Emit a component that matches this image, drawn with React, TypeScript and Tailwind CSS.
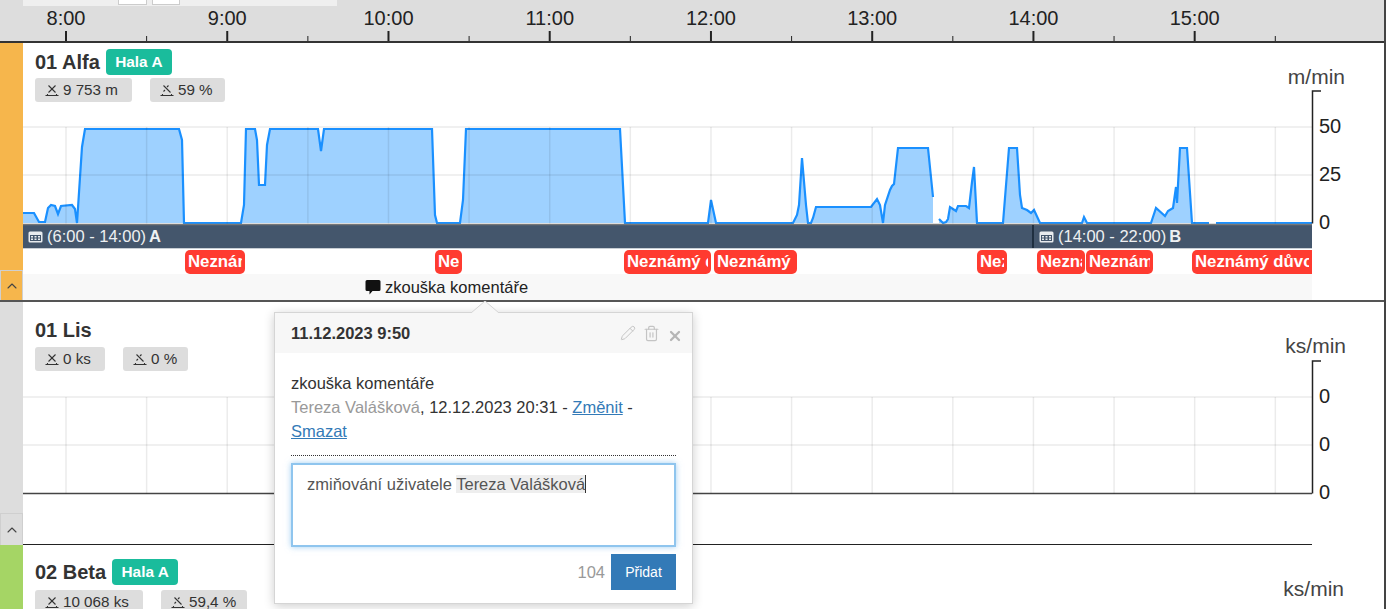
import { Pencil, Trash2, X, ChevronUp } from 'lucide-react';

const HOURS = ['8:00', '9:00', '10:00', '11:00', '12:00', '13:00', '14:00', '15:00'];
const GRID_X = Array.from({ length: 16 }, (_, i) => 66 + i * 80.62);

const ALFA_LINE = [
  [23, 213], [34, 213], [39, 222], [45, 222], [48, 208], [51, 205], [55, 206], [58, 214], [61, 206], [72, 205], [75, 209], [77, 223],
  [82, 147], [85, 129], [179, 129], [182, 140], [184, 223], [241, 223], [244, 205], [246, 129], [255, 129], [257, 140], [259, 185], [265, 185],
  [267, 145], [270, 129], [318, 129], [321, 151], [324, 129], [432, 129], [435, 215], [437, 223], [460, 223], [463, 200], [466, 129], [620, 129],
  [625, 223], [708, 223], [711, 200], [716, 223], [793, 223], [797, 215], [799, 205], [802, 158], [806, 205], [808, 223], [811, 223], [813, 218],
  [816, 207], [871, 207], [877, 199], [880, 205], [883, 223], [885, 205], [890, 190], [892, 186], [894, 184], [898, 148], [928, 148], [933, 197],
];
const ALFA_LINE_2 = [
  [939, 219], [943, 223], [946, 222], [948, 219], [950, 207], [956, 211], [958, 206], [966, 206], [969, 208], [972, 182], [974, 167], [977, 223],
  [1003, 223], [1009, 148], [1017, 148], [1020, 195], [1022, 208], [1027, 210], [1031, 213], [1034, 210], [1040, 223], [1082, 223], [1084, 217],
  [1087, 223], [1151, 223], [1156, 208], [1165, 216], [1168, 211], [1173, 208], [1176, 187], [1177, 203], [1180, 148], [1187, 148], [1192, 223], [1209, 223],
];
const ALFA_LINE_3 = [[1216, 223], [1312, 223]];

const FAULTS = [
  { left: 185, width: 60 },
  { left: 435, width: 27 },
  { left: 624, width: 87 },
  { left: 714, width: 83 },
  { left: 977, width: 30 },
  { left: 1037, width: 48 },
  { left: 1086, width: 67 },
  { left: 1192, width: 120, cut: true },
];

const toPoints = (line: number[][]) => line.map((p) => p.join(',')).join(' ');

const StatIcon = ({ percent }: { percent?: boolean }) => (
  <svg width="14" height="14" viewBox="0 0 14 14" fill="none" stroke="#333" strokeWidth="1.1" className="shrink-0">
    <path d="M0.5 12.5h13M2.5 12.5v-1.5M11.5 12.5v-1.5" />
    <path d="M3.5 2.5l7 7" />
    {percent ? <path d="M8.5 2.5l-1.5 1.5M5 7l-1.5 1.5" /> : <path d="M10.5 2.5l-7 7" />}
  </svg>
);

const CalendarIcon = () => (
  <svg width="15" height="12" viewBox="0 0 15 12" className="shrink-0">
    <rect x="0.5" y="0.5" width="14" height="11" rx="1.5" fill="#e8ebee" />
    <path d="M2 4h11v6H2z" fill="#44566c" />
    <path d="M3 5h2v1.5H3zM6.5 5h2v1.5h-2zM10 5h2v1.5h-2zM3 7.5h2V9H3zM6.5 7.5h2V9h-2zM10 7.5h2V9h-2z" fill="#e8ebee" />
  </svg>
);

const Stat = ({ text, percent, className }: { text: string; percent?: boolean; className: string }) => (
  <div className={`flex h-[24px] items-center gap-[4px] rounded-[3px] bg-[#dddddd] pl-[10px] text-[15.2px] text-[#333] ${className}`}>
    <StatIcon percent={percent} />
    <span>{text}</span>
  </div>
);

const Badge = () => (
  <span className="flex h-[26px] w-[66px] items-center justify-center rounded-[4px] bg-[#1abc9c] text-[15.4px] font-bold text-white">
    Hala A
  </span>
);

const Chart = ({ top, height, labels, children }: { top: number; height: number; labels: string[]; children?: React.ReactNode }) => {
  // page coordinates are used inside the viewBox, top is the page y of the svg
  const gridTop = top + (labels === ALFA_LABELS ? 25 : 25);
  const gridY = [gridTop, gridTop + 48, gridTop + 96.5];
  return (
    <svg
      width="1363"
      height={height}
      viewBox={`23 ${top} 1363 ${height}`}
      className="block overflow-visible"
      style={{ fontFamily: '"Liberation Sans", Arial, sans-serif' }}
    >
      {children}
      {gridY.slice(0, 2).map((y) => (
        <line key={y} x1="23" x2="1312" y1={y} y2={y} stroke="#000" strokeOpacity="0.08" strokeWidth="1.5" />
      ))}
      {GRID_X.map((x) => (
        <line key={x} x1={x} x2={x} y1={gridTop} y2={gridY[2]} stroke="#000" strokeOpacity="0.08" strokeWidth="1.5" />
      ))}
      <path d={`M1321 ${gridTop - 36}h-8.5V${gridY[2]}`} fill="none" stroke="#222" strokeWidth="1.5" />
      {labels.map((label, i) => (
        <text key={i} x="1319" y={gridY[i] + 5.5} fontSize="20" fill="#222">
          {label}
        </text>
      ))}
    </svg>
  );
};

const ALFA_LABELS = ['50', '25', '0'];
const ZERO_LABELS = ['0', '0', '0'];

const Strip = ({ color, cellClass }: { color: string; cellClass: string }) => (
  <div className={`flex w-[23px] shrink-0 flex-col justify-end ${color}`}>
    <div className={`flex items-center justify-center border border-b-0 border-[#cfcfcf] ${cellClass}`}>
      <ChevronUp size={16} strokeWidth={1.6} className="text-[#444]" />
    </div>
  </div>
);

const Comment = () => (
  <div className="absolute left-[274px] top-[312px] z-10 h-[292px] w-[419px] border border-[#d5d5d5] bg-white text-[16.5px] text-[#333] shadow-[0_2px_10px_rgba(0,0,0,0.2)]">
    <svg width="28" height="12" viewBox="0 0 28 12" className="absolute left-[196px] top-[-12px]">
      <path d="M0 12L14 0l14 12" fill="#f7f7f7" stroke="#d5d5d5" />
    </svg>
    <div className="flex h-[40px] items-center justify-between bg-[#f7f7f7] pl-[16px] pr-[9px]">
      <span className="font-bold">11.12.2023 9:50</span>
      <div className="flex items-center gap-[7px] text-[#c4c4c4]">
        <Pencil size={16} strokeWidth={1.5} className="-scale-x-100 rotate-90" />
        <Trash2 size={17} strokeWidth={1.7} />
        <X size={16} strokeWidth={3.4} className="mt-[6px] text-[#b5b5b5]" />
      </div>
    </div>
    <div className="px-[16px] pt-[18px]">
      <div className="h-[85px] border-b border-dotted border-[#333] leading-[24px]">
        <div>zkouška komentáře</div>
        <div>
          <span className="text-[#999]">Tereza Valášková</span>, 12.12.2023 20:31 -{' '}
          <a href="#" className="text-[#337ab7] underline">
            Změnit
          </a>{' '}
          -{' '}
          <a href="#" className="text-[#337ab7] underline">
            Smazat
          </a>
        </div>
      </div>
      <div className="mt-[7px] h-[84px] border-2 border-[#8fc5ee] px-[14px] py-[7px] leading-[24px] text-[#555] shadow-[0_0_6px_rgba(102,175,233,0.6)]">
        zmiňování uživatele <span className="border-r border-[#333] bg-[#eeeeee]">Tereza Valášková</span>
      </div>
      <div className="mt-[7px] flex items-center justify-end gap-[6px]">
        <span className="text-[#999]">104</span>
        <button className="h-[36px] w-[65px] bg-[#337ab7] text-[14px] text-white">Přidat</button>
      </div>
    </div>
  </div>
);

export default function App() {
  return (
    <div className="h-[614px] w-[1390px] overflow-hidden bg-white font-['Liberation_Sans',Arial,sans-serif]">
      <div className="relative h-[609px] w-[1386px] overflow-hidden border-r-2 border-[#444]">
        <header className="h-[43px] border-b-2 border-[#333] bg-[#dddddd]">
          <div className="ml-[23px] flex h-[6px] w-[314px] items-end bg-[#efefef] pl-[95px]">
            <div className="mb-px h-[6px] w-[29px] border border-t-0 border-[#ccc] bg-white" />
            <div className="mb-px ml-[5px] h-[6px] w-[28px] border border-t-0 border-[#ccc] bg-white" />
          </div>
          <div className="ml-[-14.6px] flex h-[25px] items-center">
            {HOURS.map((hour) => (
              <div key={hour} className="w-[161.24px] shrink-0 text-center text-[20px] leading-[25px] text-[#222]">
                {hour}
              </div>
            ))}
          </div>
          <svg width="1385" height="10" viewBox="0 32 1385 10" className="block">
            {GRID_X.map((x, i) => (
              <line key={x} x1={x} x2={x} y1={i % 2 ? 37 : 32} y2="42" stroke="#222" strokeWidth={i % 2 ? 1 : 2} />
            ))}
          </svg>
        </header>

        {/* Alfa */}
        <section className="flex h-[259px] border-b-2 border-[#555]">
          <Strip color="bg-[#f6b64c]" cellClass="h-[30px] bg-[#f6b64c]" />
          <div className="flex-1">
            <div className="flex h-[59px] justify-between pl-[12px] pr-[41px]">
              <div>
                <div className="flex h-[35px] items-center gap-[6px] pt-[3px] text-[20px] font-bold text-[#333]">
                  01 Alfa
                  <Badge />
                </div>
                <div className="flex gap-[18px]">
                  <Stat text="9 753 m" className="w-[97px]" />
                  <Stat text="59 %" percent className="w-[75px]" />
                </div>
              </div>
              <div className="pt-[22px] text-[21px] leading-[24px] text-[#444]">m/min</div>
            </div>
            <Chart top={102} height={123} labels={ALFA_LABELS}>
              <polygon points={`23,223 ${toPoints(ALFA_LINE)} 933,223`} fill="#0d8bff" fillOpacity="0.4" />
              <polygon points={`939,223 ${toPoints(ALFA_LINE_2)}`} fill="#0d8bff" fillOpacity="0.4" />
              <polyline points={toPoints(ALFA_LINE)} fill="none" stroke="#1a90ff" strokeWidth="2.2" />
              <polyline points={toPoints(ALFA_LINE_2)} fill="none" stroke="#1a90ff" strokeWidth="2.2" />
              <polyline points={toPoints(ALFA_LINE_3)} fill="none" stroke="#1a90ff" strokeWidth="2.2" />
              <line x1="23" x2="1312" y1="224.5" y2="224.5" stroke="#777" strokeWidth="1.5" />
            </Chart>
            <div className="flex h-[24px] w-[1289px] border-b border-[#c8ced4] bg-[#44566c] text-[16.5px] leading-[23px] text-[#eef0f2]">
              <div className="flex w-[1009px] items-center gap-[2px] pl-[5px]">
                <CalendarIcon />
                <span className="ml-[2px]">(6:00 - 14:00)</span>
                <b className="ml-[1px]">A</b>
              </div>
              <div className="flex flex-1 items-center gap-[2px] border-l-2 border-[#1f2f40] pl-[5px]">
                <CalendarIcon />
                <span className="ml-[2px]">(14:00 - 22:00)</span>
                <b className="ml-[1px]">B</b>
              </div>
            </div>
            <div className="relative h-[25px] w-[1289px]">
              {FAULTS.map((fault) => (
                <div
                  key={fault.left}
                  className={`absolute top-[1px] h-[24px] bg-[#ff3b30] px-[3px] text-[16.8px] font-bold leading-[24px] text-white ${fault.cut ? 'rounded-l-[5px]' : 'rounded-[5px]'}`}
                  style={{ left: fault.left - 23, width: fault.width }}
                >
                  <div className="overflow-hidden whitespace-nowrap">Neznámý důvod</div>
                </div>
              ))}
            </div>
            <div className="flex h-[26px] w-[1289px] items-center gap-[4px] bg-[#f8f8f8] pl-[342px] text-[16.5px] text-[#222]">
              <svg width="16" height="16" viewBox="0 0 16 16" fill="#111">
                <path d="M2 1h12a1.5 1.5 0 0 1 1.5 1.5v8A1.5 1.5 0 0 1 14 12H7.5L4.5 15.5V12H2A1.5 1.5 0 0 1 .5 10.5v-8A1.5 1.5 0 0 1 2 1z" />
              </svg>
              zkouška komentáře
            </div>
          </div>
        </section>

        {/* Lis */}
        <section className="flex h-[243px]">
          <Strip color="bg-[#dddddd]" cellClass="h-[32px] bg-[#dddddd]" />
          <div className="flex-1">
            <div className="flex h-[70px] justify-between pl-[12px] pr-[40px]">
              <div>
                <div className="flex h-[45px] items-center pt-[11px] text-[20px] font-bold text-[#333]">01 Lis</div>
                <div className="flex gap-[18px]">
                  <Stat text="0 ks" className="w-[70px]" />
                  <Stat text="0 %" percent className="w-[65px]" />
                </div>
              </div>
              <div className="pt-[32px] text-[21px] leading-[24px] text-[#444]">ks/min</div>
            </div>
            <Chart top={372} height={123} labels={ZERO_LABELS}>
              <line x1="23" x2="1312" y1="493.5" y2="493.5" stroke="#444" strokeWidth="1.5" />
            </Chart>
            <div className="mt-[49px] h-px w-[1289px] bg-[#222]" />
          </div>
        </section>

        {/* Beta */}
        <section className="flex h-[64px]">
          <Strip color="bg-[#a5d565]" cellClass="hidden" />
          <div className="flex-1">
            <div className="flex h-[64px] justify-between pl-[12px] pr-[40px]">
              <div>
                <div className="flex h-[45px] items-center gap-[6px] pt-[9px] text-[20px] font-bold text-[#333]">
                  02 Beta
                  <Badge />
                </div>
                <div className="flex gap-[18px]">
                  <Stat text="10 068 ks" className="w-[108px]" />
                  <Stat text="59,4 %" percent className="w-[86px]" />
                </div>
              </div>
              <div className="pt-[32px] text-[21px] leading-[24px] text-[#444]">ks/min</div>
            </div>
            <div className="ml-[1289px] h-[5px] w-[9px] border-l-2 border-t-2 border-[#222]" />
          </div>
        </section>

        <Comment />
      </div>
    </div>
  );
}
